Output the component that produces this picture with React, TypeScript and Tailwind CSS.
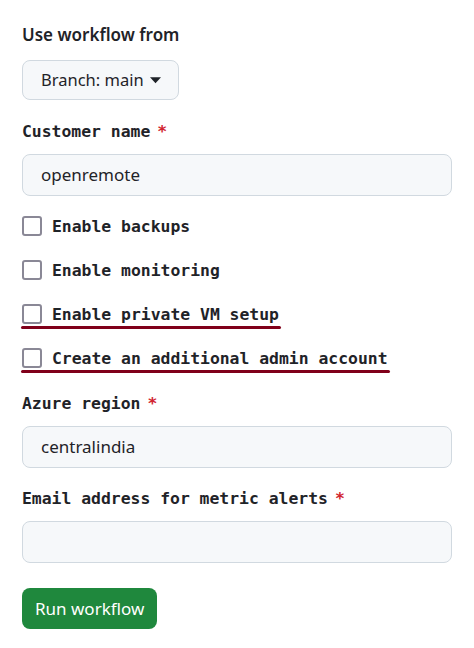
import React from "react";

const sans = { fontFamily: '"Noto Sans", "Open Sans", sans-serif' };

function Label({ children }: { children: React.ReactNode }) {
  return (
    <div className="flex items-center h-[22px] font-bold text-[16.4px] text-[#1f2328] font-['DejaVu_Sans_Mono',monospace]">
      <span>{children}</span>
      <span className="ml-[7px] text-[#d1242f]">*</span>
    </div>
  );
}

function Input({ value }: { value?: string }) {
  return (
    <div className="mt-[11px] h-[42px] w-full rounded-[8px] border border-[#d1d9e0] bg-[#f6f8fa] flex items-center pl-[18px] text-[17px] text-[#1f2328] font-['Noto_Sans',sans-serif]">
      {value}
    </div>
  );
}

function Check({ label, underline }: { label: string; underline?: boolean }) {
  return (
    <div className="relative h-[44px] flex items-center">
      <div className="flex items-center gap-[10px]">
        <div className="w-[20px] h-[20px] rounded-[3px] border-2 border-[#8a8896] bg-white" />
        <span className="font-bold text-[16.4px] text-[#1f2328] font-['DejaVu_Sans_Mono',monospace] leading-none pt-[3px]">
          {label}
        </span>
      </div>
      {underline && (
        <div className="absolute left-[-1px] right-[-2px] bottom-[7px] h-[3px] rounded-full bg-[#80001a]" />
      )}
    </div>
  );
}

export default function App() {
  return (
    <div className="w-[474px] h-[648px] bg-white px-[22px] pt-[24px]" style={sans}>
      <div className="text-[17px] font-semibold text-[#1f2328] leading-[22px] font-['Noto_Sans',sans-serif]">
        Use workflow from
      </div>
      <div className="mt-[14px] inline-flex items-center h-[40px] pl-[18px] pr-[17px] rounded-[8px] border border-[#d1d9e0] bg-[#f6f8fa] text-[16.5px] text-[#1f2328] font-['Noto_Sans',sans-serif]">
        Branch: main
        <svg width="11" height="7" viewBox="0 0 12 7" className="ml-[6px]">
          <path d="M0 0 H12 L6 6.5 Z" fill="#1f2328" />
        </svg>
      </div>

      <div className="mt-[21px]">
        <Label>Customer name</Label>
        <Input value="openremote" />
      </div>

      <div className="mt-[8px]">
        <div className="w-fit"><Check label="Enable backups" /></div>
        <div className="w-fit"><Check label="Enable monitoring" /></div>
        <div className="w-fit"><Check label="Enable private VM setup" underline /></div>
        <div className="w-fit"><Check label="Create an additional admin account" underline /></div>
      </div>

      <div className="mt-[13px]">
        <Label>Azure region</Label>
        <Input value="centralindia" />
      </div>

      <div className="mt-[20px]">
        <Label>Email address for metric alerts</Label>
        <Input />
      </div>

      <button className="mt-[25px] h-[41px] px-[13px] rounded-[8px] bg-[#1f883d] text-white text-[17px] font-['Noto_Sans',sans-serif]">
        Run workflow
      </button>
    </div>
  );
}
